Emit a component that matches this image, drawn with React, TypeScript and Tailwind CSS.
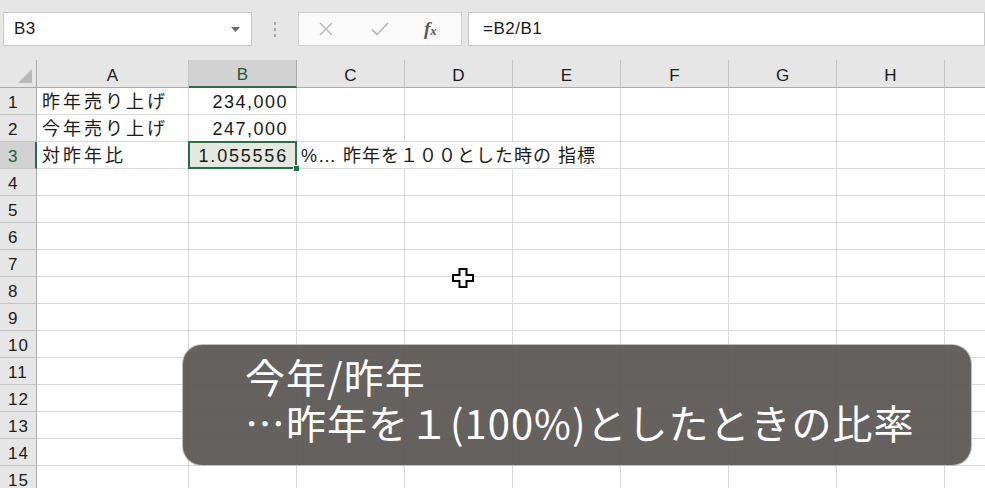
import React from "react";

const cols = ["A", "B", "C", "D", "E", "F", "G", "H", "I"];
const widths = [152, 108, 108, 108, 108, 108, 108, 108, 108];

function Cursor() {
  return (
    <svg width="24" height="22" viewBox="0 0 24 22" className="absolute left-[452px] top-[268px]">
      <polygon
        points="7.5,1 14.5,1 14.5,7 21,7 21,13 14.5,13 14.5,19 7.5,19 7.5,13 1,13 1,7 7.5,7"
        fill="#ffffff"
        stroke="#000000"
        strokeWidth="2"
        strokeLinejoin="miter"
      />
    </svg>
  );
}

function Cell({ w, children, className = "" }: { w: number; children?: React.ReactNode; className?: string }) {
  return (
    <div
      className={"h-[27px] shrink-0 border-r border-b border-[#d9d9d9] flex items-center " + className}
      style={{ width: w }}
    >
      {children}
    </div>
  );
}

export default function App() {
  const rows = Array.from({ length: 15 }, (_, i) => i + 1);
  return (
    <div
      className="relative w-[985px] h-[488px] overflow-hidden bg-white text-[#1a1a1a]"
      style={{ fontFamily: '"Liberation Sans", "Noto Sans CJK JP", sans-serif' }}
    >
      {/* formula bar */}
      <div className="h-[60px] bg-[#e6e6e6] flex items-start pt-[12px] pl-[3px]">
        <div className="w-[249px] h-[34px] bg-white border border-[#c8c8c8] flex items-center justify-between pl-[10px] pr-[11px]">
          <span className="text-[17px] tracking-[0.5px]">B3</span>
          <svg width="9" height="5" viewBox="0 0 9 5">
            <polygon points="0,0 9,0 4.5,5" fill="#666" />
          </svg>
        </div>
        <div className="w-[46px] h-[34px] flex flex-col items-center justify-center gap-[3px]">
          <span className="w-[2px] h-[3px] bg-[#a8a8a8]" />
          <span className="w-[2px] h-[3px] bg-[#a8a8a8]" />
          <span className="w-[2px] h-[3px] bg-[#a8a8a8]" />
        </div>
        <div className="w-[164px] h-[34px] bg-[#fafafa] border border-[#d0d0d0] flex items-center">
          <svg width="16" height="16" viewBox="0 0 16 16" className="ml-[19px]">
            <path d="M2 2 L14 14 M14 2 L2 14" stroke="#bdbdbd" strokeWidth="1.6" />
          </svg>
          <svg width="18" height="16" viewBox="0 0 18 16" className="ml-[37px]">
            <path d="M1 8.5 L6 13.5 L17 2" stroke="#bdbdbd" strokeWidth="1.8" fill="none" />
          </svg>
          <span
            className="ml-[35px] text-[19px] italic font-bold text-[#5a5a5a]"
            style={{ fontFamily: '"Liberation Serif", serif' }}
          >
            f<span className="text-[13px]">x</span>
          </span>
        </div>
        <div className="ml-[6px] flex-1 h-[34px] bg-white border border-[#c8c8c8] flex items-center pl-[14px]">
          <span className="text-[17px] tracking-[0.5px]">=B2/B1</span>
        </div>
      </div>

      {/* column headers */}
      <div className="flex h-[28px] bg-[#e6e6e6]">
        <div className="w-[37px] shrink-0 h-full border-r border-b border-[#ababab] relative">
          <svg width="14" height="14" viewBox="0 0 14 14" className="absolute left-[18px] top-[9px]">
            <polygon points="14,0 14,14 0,14" fill="#b8b8b8" />
          </svg>
        </div>
        {cols.map((c, i) => (
          <div
            key={c}
            className={
              "shrink-0 h-full flex items-center justify-center text-[17px] border-r " +
              (c === "B"
                ? "bg-[#d2d2d2] border-b-2 border-b-[#217346] border-r-[#ababab] text-[#1f5c3a]"
                : "border-b border-b-[#ababab] border-r-[#c4c4c4]")
            }
            style={{ width: widths[i] }}
          >
            <span className="pt-[4px]">{c}</span>
          </div>
        ))}
      </div>

      {/* rows */}
      {rows.map((r) => (
        <div key={r} className="flex">
          <div
            className={
              "w-[37px] shrink-0 h-[27px] border-b border-[#c4c4c4] flex items-center pl-[8px] text-[17px] tracking-[1px] " +
              (r === 3 ? "bg-[#d2d2d2] border-r-2 border-r-[#217346] text-[#1f5c3a]" : "bg-[#e6e6e6] border-r border-r-[#ababab]")
            }
          >
            <span className="pt-[3px]">{r}</span>
          </div>
          {r === 1 && (
            <>
              <Cell w={152} className="pl-[5px] text-[18px] tracking-[3px]">
                <span className="pt-[2px]">昨年売り上げ</span>
              </Cell>
              <Cell w={108} className="justify-end pr-[8px] text-[18px] tracking-[1.5px]">
                <span className="pt-[3px]">234,000</span>
              </Cell>
              {widths.slice(2).map((w, i) => (
                <Cell key={i} w={w} />
              ))}
            </>
          )}
          {r === 2 && (
            <>
              <Cell w={152} className="pl-[5px] text-[18px] tracking-[3px]">
                <span className="pt-[2px]">今年売り上げ</span>
              </Cell>
              <Cell w={108} className="justify-end pr-[8px] text-[18px] tracking-[1.5px]">
                <span className="pt-[3px]">247,000</span>
              </Cell>
              {widths.slice(2).map((w, i) => (
                <Cell key={i} w={w} />
              ))}
            </>
          )}
          {r === 3 && (
            <>
              <Cell w={152} className="pl-[5px] text-[18px] tracking-[3px]">
                <span className="pt-[2px]">対昨年比</span>
              </Cell>
              <Cell w={108} className="relative justify-end pr-[8px] text-[18px] tracking-[1.8px] bg-[#e4e8de]">
                <span className="pt-[3px]">1.055556</span>
                <div className="absolute left-[-1px] top-[-1px] w-[109px] h-[28px] border-2 border-[#217346]" />
                <div className="absolute right-[-4px] bottom-[-4px] w-[7px] h-[7px] bg-[#217346] border border-white" />
              </Cell>
              <Cell w={324} className="pl-[4px] text-[18px] tracking-[1px] whitespace-nowrap">
                <span className="pt-[2px]">%… 昨年を１００とした時の 指標</span>
              </Cell>
              {widths.slice(5).map((w, i) => (
                <Cell key={i} w={w} />
              ))}
            </>
          )}
          {r > 3 && widths.map((w, i) => <Cell key={i} w={w} />)}
        </div>
      ))}

      <Cursor />

      {/* caption overlay */}
      <div
        className="absolute left-[182px] top-[344px] w-[790px] h-[122px] rounded-[20px] bg-[#5d5955]/95 border border-white/60 pl-[62px] pt-[8px] text-white text-[40px] leading-[46px] tracking-[1px]"
        style={{ fontFamily: '"Noto Sans CJK JP", sans-serif' }}
      >
        <div>今年/昨年</div>
        <div>…昨年を１(100%)としたときの比率</div>
      </div>
    </div>
  );
}
